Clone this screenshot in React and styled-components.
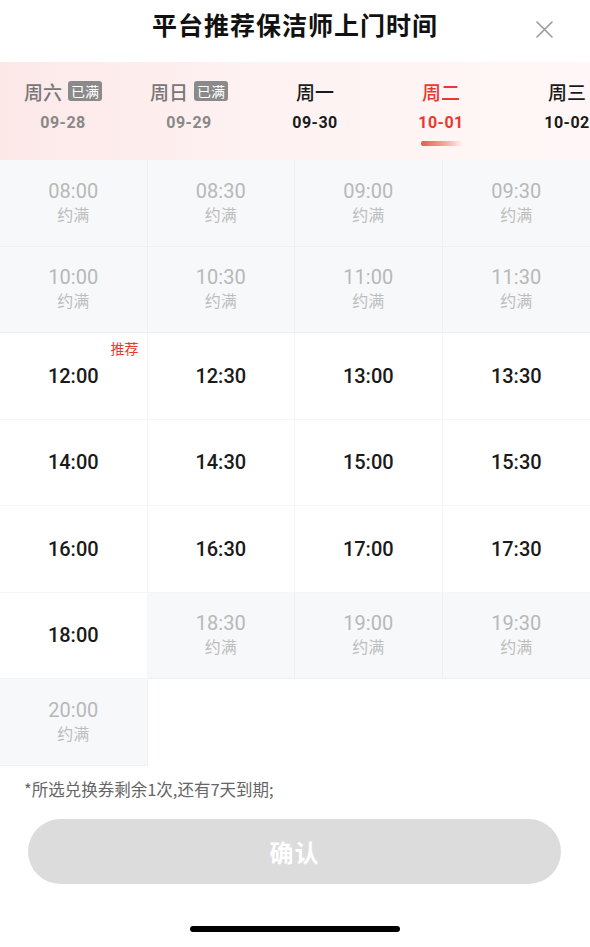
import React from "react";
import styled, { createGlobalStyle } from "styled-components";

const GlobalStyle = createGlobalStyle`
    html, body {
        margin:0;
        padding:0;
        background:#fff;
    }
    body {
        font-family: Roboto, "Noto Sans", "Noto Sans CJK SC", sans-serif;
        color:#1a1a1a;
    }
    * { box-sizing:border-box; }
`;

const Page = styled.div`
    width:590px;
    height:947px;
    display:flex;
    flex-direction:column;
    background:#fff;
    overflow:hidden;
`;

const Header = styled.div`
    position:relative;
    height:62px;
    display:flex;
    align-items:flex-start;
    justify-content:center;
    padding-top:6px;
`;

const Title = styled.h1`
    margin:0;
    font-size:25px;
    font-weight:700;
    letter-spacing:1px;
    line-height:36px;
    color:#111;
    font-family: "Noto Sans CJK SC", sans-serif;
`;

const Close = styled.button`
    position:absolute;
    right:36px;
    top:19px;
    width:20px;
    height:20px;
    padding:0;
    border:none;
    background:none;
    display:flex;
    align-items:center;
    justify-content:center;
`;

const Tabs = styled.div`
    height:98px;
    display:flex;
    overflow:hidden;
    background:linear-gradient(90deg, #fde8e8 0%, #fef2f2 45%, #fff7f7 100%);
`;

const Tab = styled.div`
    flex:0 0 126px;
    display:flex;
    flex-direction:column;
    align-items:center;
    padding-top:17px;
    position:relative;
`;

const DayRow = styled.div`
    display:flex;
    align-items:center;
    gap:6px;
    height:24px;
    font-family: "Noto Sans CJK SC", sans-serif;
    font-size:19px;
    font-weight:500;
    color:${p => p.$active ? "#e8392f" : p.$full ? "#777" : "#1a1a1a"};
`;

const FullBadge = styled.span`
    background:#8a8a8a;
    color:#fff;
    font-size:14px;
    font-weight:400;
    line-height:20px;
    padding:0 3px;
    border-radius:3px;
`;

const DateText = styled.div`
    margin-top:10px;
    font-size:16px;
    font-weight:700;
    letter-spacing:0.5px;
    color:${p => p.$active ? "#e8392f" : p.$full ? "#888" : "#1a1a1a"};
`;

const Indicator = styled.div`
    margin-top:9px;
    width:41px;
    height:5px;
    border-radius:2px;
    background:linear-gradient(90deg, #ea5a52 0%, #f5a9a4 60%, rgba(255,240,240,0.6) 100%);
`;

const Grid = styled.div`
    display:grid;
    grid-template-columns:repeat(4, 1fr);
    grid-auto-rows:86.5px;
`;

const Cell = styled.div`
    position:relative;
    display:flex;
    flex-direction:column;
    align-items:center;
    justify-content:center;
    background:${p => p.$full ? "#f7f8fa" : "#fff"};
    border-right:1px solid ${p => p.$full ? "#eef0f3" : "#f6f6f7"};
    border-bottom:1px solid ${p => p.$full ? "#eef0f3" : "#f6f6f7"};
    &:nth-child(4n) { border-right:none; }
`;

const Time = styled.div`
    font-size:20px;
    font-weight:${p => p.$full ? 400 : 500};
    color:${p => p.$full ? "#b8b8b8" : "#1a1a1a"};
    line-height:24px;
`;

const FullLabel = styled.div`
    font-family: "Noto Sans CJK SC", sans-serif;
    font-size:16px;
    color:#bdbdbd;
    line-height:22px;
    margin-bottom:2px;
`;

const Recommend = styled.span`
    position:absolute;
    top:5px;
    right:8px;
    font-family: "Noto Sans CJK SC", sans-serif;
    font-size:14px;
    color:#e8392f;
`;

const Note = styled.p`
    margin:12px 0 0 24px;
    font-family: "Noto Sans CJK SC", sans-serif;
    font-size:16.5px;
    color:#666;
    line-height:22px;
`;

const Confirm = styled.button`
    margin:19px 29px 0 28px;
    height:65px;
    border:none;
    border-radius:33px;
    background:#dcdcdc;
    color:#fff;
    font-family: "Noto Sans CJK SC", sans-serif;
    font-size:24px;
    font-weight:700;
    letter-spacing:1px;
`;

const HomeBar = styled.div`
    margin:42px auto 0;
    width:210px;
    height:6px;
    border-radius:3px;
    background:#000;
`;

const days = [
    { day: "周六", date: "09-28", full: true },
    { day: "周日", date: "09-29", full: true },
    { day: "周一", date: "09-30" },
    { day: "周二", date: "10-01", active: true },
    { day: "周三", date: "10-02" },
];

const fullSlots = ["08:00", "08:30", "09:00", "09:30", "10:00", "10:30", "11:00", "11:30", "18:30", "19:00", "19:30", "20:00"];

const slots = [];
for (let h = 8; h <= 20; h++) {
    ["00", "30"].forEach(m => {
        const t = `${h < 10 ? "0" + h : h}:${m}`;
        if (h === 20 && m === "30") return;
        slots.push(t);
    });
}

const App = () => (
    <>
        <GlobalStyle />
        <Page>
            <Header>
                <Title>平台推荐保洁师上门时间</Title>
                <Close aria-label="close">
                    <svg width="17" height="17" viewBox="0 0 17 17">
                        <path d="M1 1L16 16M16 1L1 16" stroke="#9a9a9a" strokeWidth="1.6" strokeLinecap="round" />
                    </svg>
                </Close>
            </Header>
            <Tabs>
                {days.map(d => (
                    <Tab key={d.date}>
                        <DayRow $full={d.full} $active={d.active}>
                            {d.day}
                            {d.full && <FullBadge>已满</FullBadge>}
                        </DayRow>
                        <DateText $full={d.full} $active={d.active}>{d.date}</DateText>
                        {d.active && <Indicator />}
                    </Tab>
                ))}
            </Tabs>
            <Grid>
                {slots.map(t => {
                    const full = fullSlots.includes(t);
                    return (
                        <Cell key={t} $full={full}>
                            {t === "12:00" && <Recommend>推荐</Recommend>}
                            <Time $full={full}>{t}</Time>
                            {full && <FullLabel>约满</FullLabel>}
                        </Cell>
                    );
                })}
            </Grid>
            <Note>*所选兑换券剩余1次,还有7天到期;</Note>
            <Confirm>确认</Confirm>
            <HomeBar />
        </Page>
    </>
);

export default App;
